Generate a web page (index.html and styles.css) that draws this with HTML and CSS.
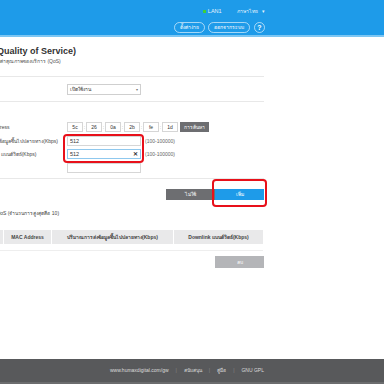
FILE: index.html
```html
<!DOCTYPE html>
<html lang="th">

<head>
    <meta charset="UTF-8">
    <meta name="viewport" content="width=device-width, initial-scale=1.0">
    <title>QoS</title>
    <link rel="stylesheet" href="styles.css">
</head>

<body>
    <header class="topbar">
        <div class="topbar-inner">
            <div class="status-row">
                <span class="lan"><i class="lan-dot"></i>LAN1</span>
                <span class="lang">ภาษาไทย <span class="caret">▾</span></span>
            </div>
            <div class="action-row">
                <a class="pill">ตั้งค่าง่าย</a>
                <a class="pill">ออกจากระบบ</a>
                <a class="pill help">?</a>
            </div>
        </div>
    </header>

    <main class="content">
        <h1 class="page-title">QoS (Quality of Service)</h1>
        <p class="page-sub">ตั้งค่าคุณภาพของบริการ (QoS)</p>

        <div class="section">
            <div class="form-row">
                <label class="form-label">QoS</label>
                <div class="select">เปิดใช้งาน <span class="caret">▾</span></div>
            </div>
        </div>

        <div class="section form">
            <div class="form-row mac-row">
                <label class="form-label">MAC Address</label>
                <div class="mac">
                    <span class="mac-box">5c</span><span class="colon">:</span>
                    <span class="mac-box">26</span><span class="colon">:</span>
                    <span class="mac-box">0a</span><span class="colon">:</span>
                    <span class="mac-box">2b</span><span class="colon">:</span>
                    <span class="mac-box">fe</span><span class="colon">:</span>
                    <span class="mac-box">1d</span>
                    <button class="btn-search">การค้นหา</button>
                </div>
            </div>

            <div class="rate-group">
                <div class="form-row">
                    <label class="form-label">Uplink ส่งข้อมูลขึ้นไปปลายทาง(Kbps)</label>
                    <div class="input">512</div>
                    <span class="hint">(100-100000)</span>
                </div>
                <div class="form-row">
                    <label class="form-label">Downlink แบนด์วิดธ์(Kbps)</label>
                    <div class="input focused">512 <span class="clear">✕</span></div>
                    <span class="hint">(100-100000)</span>
                </div>
                <div class="highlight"></div>
            </div>

            <div class="form-row">
                <label class="form-label"></label>
                <div class="input"></div>
            </div>
        </div>

        <div class="btn-row">
            <button class="btn btn-gray">ไม่ใช้</button>
            <span class="btn-wrap">
                <button class="btn btn-blue">เพิ่ม</button>
                <span class="highlight"></span>
            </span>
        </div>

        <p class="list-title">รายการ QoS (จำนวนการสูงสุดคือ 10)</p>

        <table class="qos-table">
            <thead>
                <tr>
                    <th class="col-no">ลำดับ</th>
                    <th class="col-mac">MAC Address</th>
                    <th class="col-up">ปริมาณการส่งข้อมูลขึ้นไปปลายทาง(Kbps)</th>
                    <th class="col-down">Downlink แบนด์วิดธ์(Kbps)</th>
                </tr>
            </thead>
            <tbody>
                <tr class="empty"><td colspan="4"></td></tr>
            </tbody>
        </table>

        <div class="btn-row del-row">
            <button class="btn btn-light">ลบ</button>
        </div>
    </main>

    <footer>
        <div class="footer-inner">
            <a>www.humaxdigital.com/gw</a><span class="sep">|</span><a>สนับสนุน</a><span class="sep">|</span><a>คู่มือ</a><span class="sep">|</span><a>GNU GPL</a>
        </div>
    </footer>
</body>

</html>
```

FILE: styles.css
```css
body {
    font-family: 'Liberation Sans', Arial, sans-serif;
    color: #333;
    margin: 0;
    padding: 0;
    background-color: #fff;
    height: 384px;
    overflow: hidden;
    display: flex;
    flex-direction: column;
    font-size: 6px;
    line-height: 8px;
}

/* top bar */
.topbar {
    background-color: #1e9be9;
    border-bottom: 2px solid #7cc6f3;
    height: 35px;
    flex: none;
}

.topbar-inner {
    width: 265px;
    display: flex;
    flex-direction: column;
    align-items: flex-end;
}

.status-row {
    display: flex;
    align-items: center;
    height: 12px;
    margin-top: 5px;
    color: #e6f3fc;
    font-size: 5.5px;
}

.lan {
    display: flex;
    align-items: center;
    margin-right: 15px;
}

.lan-dot {
    width: 3px;
    height: 3px;
    background-color: #3ecf3a;
    margin-right: 2px;
}

.lang {
    font-size: 5px;
}

.lang .caret {
    margin-left: 3px;
    font-size: 5px;
}

.action-row {
    display: flex;
    gap: 3px;
    margin-top: 5px;
}

.pill {
    height: 9px;
    line-height: 9px;
    padding: 0 5px;
    border: 1px solid rgba(255, 255, 255, 0.6);
    border-radius: 6px;
    color: #fff;
    font-size: 5px;
}

.pill.help {
    width: 9px;
    padding: 0;
    text-align: center;
    font-size: 7px;
    font-weight: bold;
    margin-left: 1px;
}

/* content */
.content {
    flex: 1;
    width: 291px;
    margin-left: -27px;
}

.page-title {
    font-size: 9px;
    line-height: 12px;
    margin: 8px 0 0;
    color: #333;
}

.page-sub {
    font-size: 5px;
    line-height: 7px;
    margin: 1px 0 0 22px;
    color: #555;
}

.section {
    border-top: 1px solid #e8e8e8;
    margin-top: 11px;
    padding: 7px 0 7px;
}

.section + .section {
    margin-top: 0;
    padding: 20px 0 5px;
}

.form-row {
    display: flex;
    align-items: center;
    height: 10px;
    margin-bottom: 3px;
}

.form-row:last-child {
    margin-bottom: 0;
}

.form-label {
    width: 88px;
    padding-left: 6px;
    flex: none;
    white-space: nowrap;
    font-size: 5px;
    line-height: 8px;
    color: #444;
}

.select {
    width: 68px;
    height: 9px;
    line-height: 9px;
    padding: 0 2px;
    border: 1px solid #cfcfcf;
    font-size: 5px;
    display: flex;
    justify-content: space-between;
}

.select .caret {
    color: #777;
    font-size: 4px;
}

.mac-row {
    margin-bottom: 4px;
}

.mac {
    display: flex;
    align-items: center;
}

.mac-box {
    width: 14px;
    height: 8px;
    line-height: 8px;
    border: 1px solid #d6d6d6;
    text-align: center;
    font-size: 5px;
}

.colon {
    width: 3px;
    text-align: center;
    color: #999;
    font-size: 5px;
}

.btn-search {
    margin-left: 2px;
    width: 29px;
    height: 10px;
    padding: 0;
    border: none;
    background-color: #6d6e71;
    color: #fff;
    font-family: inherit;
    font-size: 5px;
    line-height: 10px;
}

.rate-group {
    position: relative;
    margin-bottom: 4px;
}

.input {
    width: 68px;
    height: 8px;
    line-height: 8px;
    padding: 0 2px;
    border: 1px solid #d6d6d6;
    font-size: 5.5px;
    display: flex;
    justify-content: space-between;
}

.input.focused {
    border-color: #8fc8ee;
}

.clear {
    font-weight: bold;
    color: #333;
    font-size: 6px;
}

.hint {
    margin-left: 4px;
    font-size: 5px;
    color: #666;
}

.highlight {
    position: absolute;
    left: 90px;
    top: -2px;
    width: 77px;
    height: 25px;
    border: 2px solid #e8101a;
    border-radius: 4px;
}

.form {
    border-bottom: 1px solid #e8e8e8;
}

.btn-row {
    display: flex;
    justify-content: flex-end;
    padding-top: 10px;
}

.btn {
    width: 49px;
    height: 11px;
    padding: 0;
    border: none;
    color: #fff;
    font-family: inherit;
    font-size: 5px;
    line-height: 11px;
}

.btn-gray {
    background-color: #6d6e71;
}

.btn-blue {
    background-color: #1e9be9;
}

.btn-light {
    width: 49px;
    height: 12px;
    background-color: #b4b5b8;
}

.btn-wrap {
    position: relative;
    display: flex;
}

.btn-wrap .highlight {
    left: -3px;
    top: -10px;
    width: 51px;
    height: 24px;
}

.list-title {
    margin: 10px 0 13px 4px;
    font-size: 5px;
    line-height: 7px;
    color: #444;
}

.qos-table {
    width: 292px;
    border-collapse: separate;
    border-spacing: 1px 0;
    margin-left: -1px;
}

.qos-table th {
    background-color: #e9e9ea;
    height: 14px;
    padding: 0;
    font-size: 5px;
    line-height: 7px;
    font-weight: bold;
    color: #444;
    white-space: nowrap;
}

.col-no {
    width: 30px;
}

.col-mac {
    width: 47px;
}

.col-up {
    width: 121px;
}

.qos-table .empty td {
    height: 6px;
    padding: 0;
    border-bottom: 1px solid #eeeeee;
}

.del-row {
    padding-top: 5px;
}

/* footer */
footer {
    flex: none;
    height: 23px;
    background-color: #58595b;
    border-bottom: 2px solid #6b6c6e;
}

.footer-inner {
    width: 264px;
    text-align: right;
    line-height: 23px;
    color: #dcdcdc;
    font-size: 5px;
}

.sep {
    margin: 0 7px;
    color: #888;
}
```
